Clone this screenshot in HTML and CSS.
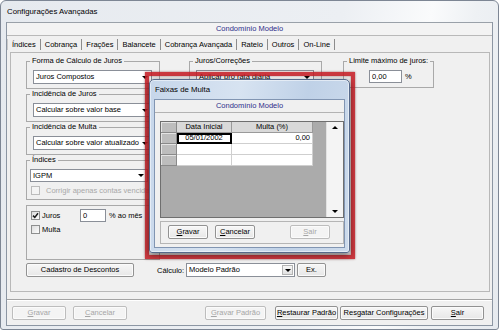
FILE: index.html
```html
<!DOCTYPE html>
<html lang="pt-BR">
<head>
    <meta charset="UTF-8">
    <title>Configurações Avançadas</title>
    <link rel="stylesheet" href="styles.css">
</head>
<body>
<div class="window">
    <div class="title-bar">Configurações Avançadas</div>

    <div class="client">
        <div class="strip">Condomínio Modelo</div>

        <div class="tabs">
            <span class="tab selected">Índices</span>
            <span class="tab">Cobrança</span>
            <span class="tab">Frações</span>
            <span class="tab">Balancete</span>
            <span class="tab">Cobrança Avançada</span>
            <span class="tab">Rateio</span>
            <span class="tab">Outros</span>
            <span class="tab">On-Line</span>
        </div>

        <div class="panel">
            <div class="panel-top">
                <div class="col-left">
                    <fieldset class="group">
                        <legend>Forma de Cálculo de Juros</legend>
                        <div class="combo combo-left"><span>Juros Compostos</span><i class="arrow"></i></div>
                    </fieldset>
                    <fieldset class="group g-tight">
                        <legend>Incidência de Juros</legend>
                        <div class="combo combo-left"><span>Calcular sobre valor base</span><i class="arrow"></i></div>
                    </fieldset>
                    <fieldset class="group">
                        <legend>Incidência de Multa</legend>
                        <div class="combo combo-left"><span>Calcular sobre valor atualizado</span><i class="arrow"></i></div>
                    </fieldset>
                    <fieldset class="group g-index">
                        <legend>Índices</legend>
                        <div class="combo combo-index"><span>IGPM</span><i class="arrow"></i></div>
                        <div class="check-row disabled">
                            <span class="check"></span>
                            <span class="check-label">Corrigir apenas contas vencidas</span>
                        </div>
                    </fieldset>
                    <div class="group-plain">
                        <div class="juros-row">
                            <span class="check checked">
                                <svg width="7" height="7" viewBox="0 0 7 7"><path d="M1 3.6 L2.8 5.4 L6 1.3" stroke="#1b1b1b" stroke-width="1.5" fill="none"/></svg>
                            </span>
                            <span class="juros-label">Juros</span>
                            <span class="field field-juros">0</span>
                            <span class="unit">% ao mês</span>
                        </div>
                        <div class="check-row multa-row">
                            <span class="check"></span>
                            <span class="check-label">Multa</span>
                        </div>
                    </div>
                </div>

                <div class="col-mid">
                    <fieldset class="group">
                        <legend>Juros/Correções</legend>
                        <div class="combo combo-mid"><span>Aplicar pro rata diária</span><i class="arrow"></i></div>
                    </fieldset>
                </div>

                <div class="col-right">
                    <fieldset class="group g-limit">
                        <legend>Limite máximo de juros:</legend>
                        <div class="limit-row">
                            <span class="field field-limit">0,00</span>
                            <span class="unit">%</span>
                        </div>
                    </fieldset>
                </div>
            </div>

            <div class="panel-bottom">
                <button class="btn btn-desc">Cadastro de Descontos</button>
                <span class="calc-label">Cálculo:</span>
                <div class="combo combo-calc"><span>Modelo Padrão</span><span class="arrow-box"><i class="arrow"></i></span></div>
                <button class="btn btn-ex">Ex.</button>
            </div>
        </div>

        <div class="footer">
            <button class="btn disabled f-gravar"><u>G</u>ravar</button>
            <button class="btn disabled f-cancelar"><u>C</u>ancelar</button>
            <button class="btn disabled f-padrao"><u>G</u>ravar Padrão</button>
            <button class="btn f-restaurar"><u>R</u>estaurar Padrão</button>
            <button class="btn f-resgatar">Resgatar Configurações</button>
            <button class="btn f-sair"><u>S</u>air</button>
        </div>
    </div>

    <div class="highlight"></div>

    <div class="dialog">
        <div class="dialog-title">Faixas de Multa</div>
        <div class="dialog-client">
            <div class="dialog-strip">Condomínio Modelo</div>

            <div class="grid-box">
                <div class="grid-area">
                    <div class="grid-row grid-head">
                        <span class="rh"></span>
                        <span class="hc">Data Inicial</span>
                        <span class="hc">Multa (%)</span>
                    </div>
                    <div class="grid-row">
                        <span class="rh"></span>
                        <span class="dc current">05/01/2002</span>
                        <span class="dc num">0,00</span>
                    </div>
                    <div class="grid-row">
                        <span class="rh"></span>
                        <span class="dc"></span>
                        <span class="dc"></span>
                    </div>
                    <div class="grid-row">
                        <span class="rh"></span>
                        <span class="dc"></span>
                        <span class="dc"></span>
                    </div>
                </div>
                <div class="vscroll">
                    <span class="sb-btn"><i class="tri-up"></i></span>
                    <span class="sb-btn"><i class="arrow"></i></span>
                </div>
            </div>

            <div class="dialog-buttons">
                <button class="btn d-btn"><u>G</u>ravar</button>
                <button class="btn d-btn d-cancel"><u>C</u>ancelar</button>
                <button class="btn d-btn disabled d-sair"><u>S</u>air</button>
            </div>
        </div>
    </div>
</div>
</body>
</html>
```

FILE: styles.css
```css
* {
    box-sizing: border-box;
}
body {
    margin: 0;
    font-family: "Liberation Sans", Arial, sans-serif;
    font-size: 7.5px;
    color: #000;
    background: #fff;
}

/* janela principal */
.window {
    position: relative;
    width: 499px;
    height: 330px;
    border: 1px solid #7d8694;
    border-radius: 6px 6px 3px 3px;
    background: linear-gradient(100deg, #e6eaef 0%, #eceff3 62%, #fafbfc 78%, #eef1f4 86%, #e6eaef 100%);
    padding: 0 5px 3px 5px;
    display: flex;
    flex-direction: column;
}
.title-bar {
    height: 21px;
    line-height: 21px;
    padding-left: 1px;
    font-size: 7.8px;
}
.client {
    flex: 1;
    background: #f0f0f0;
    border: 1px solid #8c96a3;
    border-top: none;
    display: flex;
    flex-direction: column;
}
.strip {
    height: 14px;
    line-height: 12px;
    border-top: 1px solid #9aa1a9;
    border-bottom: 1px solid #b9b9b9;
    background: #f3f3f3;
    color: #2e2e8a;
    text-align: center;
}

/* abas */
.tabs {
    height: 16px;
    display: flex;
    align-items: center;
    padding-left: 1px;
}
.tab {
    padding: 0 4px 0 4px;
    border-right: 1px solid #8c8c8c;
    line-height: 11px;
    white-space: nowrap;
}
.tab.selected {
    box-shadow: -1px 0 0 #c9c9c9;
}

.panel {
    height: 240px;
    margin: 0 2px 0 3px;
    border: 1px solid #b8b8b8;
    padding: 3px 0 0 15px;
}
.panel-top {
    display: flex;
    align-items: flex-start;
}
.col-left {
    width: 134px;
}
.col-mid {
    width: 133px;
    margin-left: 29px;
}
.col-right {
    width: 91px;
    margin-left: 21px;
}

/* caixas de grupo */
fieldset.group {
    margin: 0;
    padding: 4px 0 4px 3px;
    border: 1px solid #a9a9a9;
    min-width: 0;
}
fieldset.group legend {
    padding: 0 2px;
    height: 10px;
    line-height: 10px;
    white-space: nowrap;
}
.g-tight {
    padding-bottom: 3px;
}
.g-index {
    padding-top: 3px;
}
.g-limit {
    padding: 3px 0 6px 3px;
}
.group-plain {
    height: 55px;
    margin-top: 5px;
    border: 1px solid #a9a9a9;
    padding: 3px 0 0 4px;
}

/* combos e campos */
.combo {
    display: flex;
    align-items: center;
    height: 14px;
    background: #fff;
    border: 1px solid #8a8f98;
}
.combo span {
    flex: 1;
    padding-left: 2px;
    line-height: 12px;
    white-space: nowrap;
    overflow: hidden;
}
.arrow {
    display: block;
    width: 0;
    height: 0;
    border-left: 3px solid transparent;
    border-right: 3px solid transparent;
    border-top: 3px solid #000;
}
.combo > .arrow {
    margin-right: 3px;
}
.combo-left {
    width: 119px;
    margin-left: 3px;
}
.combo-index {
    width: 118px;
    height: 13px;
}
.combo-mid {
    width: 118px;
    margin-left: 3px;
}
.combo-calc {
    width: 109px;
}
.combo .arrow-box {
    flex: none;
    width: 11px;
    height: 10px;
    margin-right: 1px;
    padding: 0;
    border: 1px solid #b4b4b4;
    background: linear-gradient(#f7f7f7, #e2e2e2);
    display: flex;
    align-items: center;
    justify-content: center;
}
.field {
    display: block;
    height: 13px;
    line-height: 11px;
    padding-left: 2px;
    background: #fff;
    border: 1px solid #8a8f98;
}

/* caixas de seleção */
.check {
    flex: none;
    width: 9px;
    height: 9px;
    border: 1px solid #8e8f8f;
    background: linear-gradient(135deg, #dcdcdc, #fdfdfd);
    display: flex;
    align-items: center;
    justify-content: center;
}
.check-row {
    display: flex;
    align-items: center;
    height: 9px;
    margin-top: 4px;
    padding-left: 1px;
}
.check-label {
    margin-left: 6px;
    white-space: nowrap;
    line-height: 9px;
}
.check-row.disabled .check {
    border-color: #bcbcbc;
    background: #f4f4f4;
}
.check-row.disabled .check-label {
    color: #a8a8a8;
}
.juros-row {
    display: flex;
    align-items: center;
    height: 13px;
}
.juros-label {
    width: 38px;
    margin-left: 2px;
}
.field-juros {
    width: 26px;
}
.unit {
    margin-left: 3px;
}
.multa-row {
    margin-top: 3px;
    padding-left: 0;
}
.multa-row .check-label {
    margin-left: 2px;
}
.limit-row {
    display: flex;
    align-items: center;
    margin-left: 22px;
}
.field-limit {
    width: 33px;
}

.panel-bottom {
    display: flex;
    align-items: center;
    height: 14px;
    margin-top: 3px;
}
.calc-label {
    width: 29px;
    margin-left: 23px;
}

/* botões */
.btn {
    height: 14px;
    padding: 0;
    font-family: inherit;
    font-size: 7.5px;
    line-height: 12px;
    color: #000;
    text-align: center;
    white-space: nowrap;
    border: 1px solid #929292;
    border-radius: 2px;
    background: linear-gradient(#f7f7f7, #e7e7e7);
    box-shadow: inset 0 0 0 1px #fbfbfb;
}
.btn.disabled {
    color: #a6a6a6;
    border-color: #bdbdbd;
    background: #f4f4f4;
}
.btn-desc {
    width: 108px;
}
.btn-ex {
    width: 29px;
    margin-left: 2px;
}

.footer {
    display: flex;
    margin-top: 7px;
    border-top: 1px solid #a3a3a3;
    box-shadow: inset 0 1px 0 #fff;
    padding: 6px 0 0 5px;
    flex: 1;
}
.f-gravar,
.f-cancelar {
    width: 54px;
}
.f-cancelar {
    margin-left: 7px;
}
.f-padrao {
    width: 61px;
    margin-left: 78px;
}
.f-restaurar {
    width: 63px;
    margin-left: 9px;
}
.f-resgatar {
    width: 88px;
    margin-left: 2px;
}
.f-sair {
    width: 53px;
    margin-left: 3px;
}

/* marcação vermelha sobre a tela */
.highlight {
    position: absolute;
    left: 144px;
    top: 71px;
    width: 210px;
    height: 187px;
    border: 4px solid rgba(197, 30, 38, 0.88);
    box-shadow: 0 0 2px rgba(110, 0, 0, 0.6), inset 0 0 2px rgba(110, 0, 0, 0.6);
}

/* janela Faixas de Multa */
.dialog {
    position: absolute;
    left: 148px;
    top: 78px;
    width: 201px;
    height: 174px;
    border: 1px solid #56698a;
    border-radius: 5px 5px 3px 3px;
    background: linear-gradient(100deg, #c6d6ea 0%, #d7e3f1 40%, #bfd1e7 70%, #cddbec 100%);
    box-shadow: 0 2px 6px rgba(0, 0, 0, 0.55), inset 0 0 0 1px rgba(255, 255, 255, 0.5);
    padding: 0 4px 4px 4px;
    display: flex;
    flex-direction: column;
}
.dialog-title {
    height: 19px;
    line-height: 19px;
    padding-left: 1px;
    font-size: 7.8px;
}
.dialog-client {
    flex: 1;
    background: #f0f0f0;
    border: 1px solid #8195b2;
}
.dialog-strip {
    height: 13px;
    line-height: 12px;
    border-bottom: 1px solid #b3b3b3;
    color: #2e2e8a;
    text-align: center;
}
.grid-box {
    display: flex;
    width: 184px;
    height: 97px;
    margin: 8px 0 0 5px;
    border: 1px solid #6f6f6f;
}
.grid-area {
    flex: 1;
    background: #ababab;
}
.grid-row {
    display: grid;
    grid-template-columns: 16px 55px 81px;
    height: 11px;
}
.grid-row span {
    line-height: 10px;
    white-space: nowrap;
}
.rh {
    background: #bdbdbd;
    border-right: 1px solid #8a8a8a;
    border-bottom: 1px solid #8a8a8a;
    box-shadow: inset 1px 1px 0 #e4e4e4;
}
.hc {
    background: #d9d9d9;
    border-right: 1px solid #9a9a9a;
    border-bottom: 1px solid #9a9a9a;
    text-align: center;
}
.dc {
    background: #fff;
    border-right: 1px solid #cfcfcf;
    border-bottom: 1px solid #cfcfcf;
}
.dc.current {
    text-align: center;
    outline: 2px solid #000;
    outline-offset: -2px;
}
.dc.num {
    text-align: right;
    padding-right: 2px;
}
.vscroll {
    width: 17px;
    background: #f4f4f4;
    border-left: 1px solid #e2e2e2;
    display: flex;
    flex-direction: column;
    justify-content: space-between;
}
.sb-btn {
    height: 11px;
    display: flex;
    align-items: center;
    justify-content: center;
}
.tri-up {
    display: block;
    width: 0;
    height: 0;
    border-left: 3px solid transparent;
    border-right: 3px solid transparent;
    border-bottom: 3px solid #000;
}
.dialog-buttons {
    display: flex;
    width: 184px;
    height: 23px;
    margin: 3px 0 0 5px;
    border: 1px solid #b5b5b5;
    padding: 3px 13px 0 7px;
}
.d-btn {
    width: 40px;
}
.d-cancel {
    margin-left: 7px;
}
.d-sair {
    margin-left: auto;
}
```
